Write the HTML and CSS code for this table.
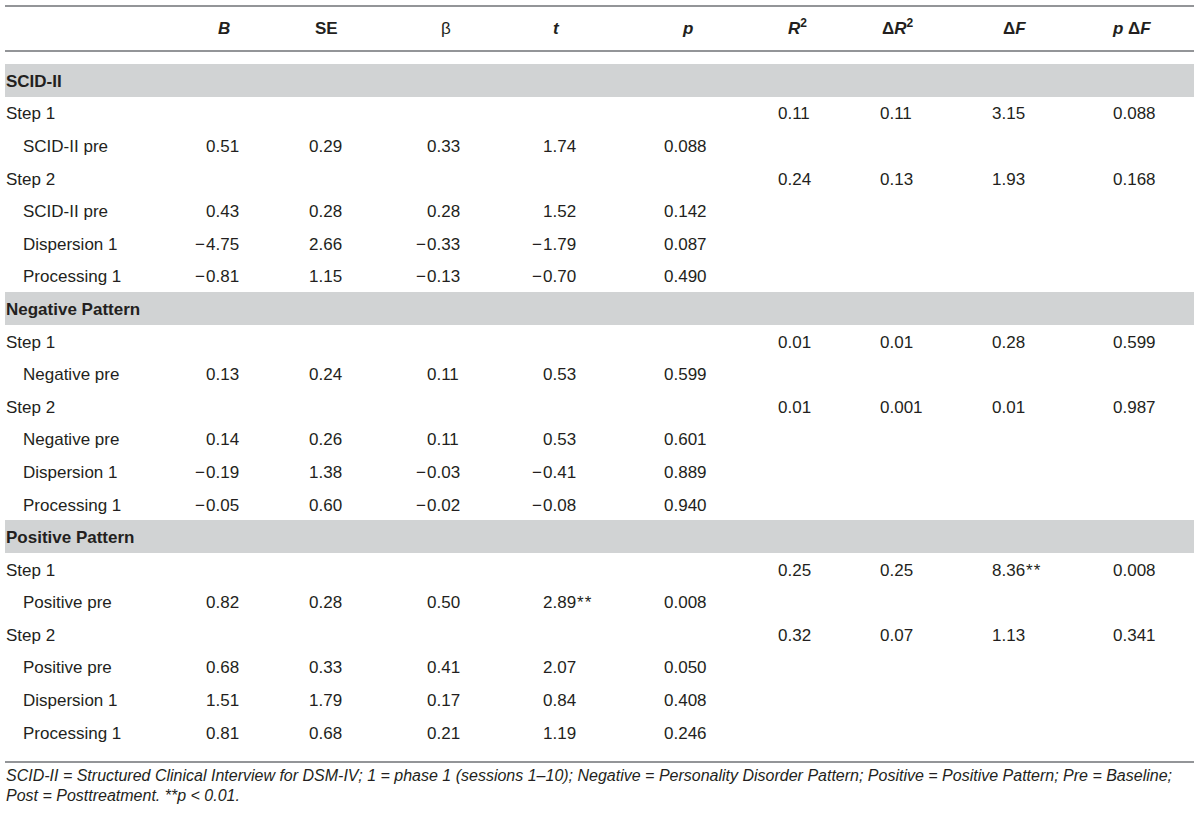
FILE: index.html
```html
<!DOCTYPE html>
<html><head>
<title>Hierarchical regression</title>
<link rel="stylesheet" href="styles.css">
<meta http-equiv="content-type" content="text/html; charset=UTF-8">
</head>
<body>
<div class="sheet">

<table class="reg">
<colgroup>
  <col class="c-label"><col class="c-b"><col class="c-se"><col class="c-beta"><col class="c-t">
  <col class="c-p"><col class="c-r2"><col class="c-dr2"><col class="c-df"><col class="c-pdf">
</colgroup>
<thead><tr>
  <th></th>
  <th><i>B</i></th>
  <th>SE</th>
  <th class="plain">&beta;</th>
  <th><i>t</i></th>
  <th><i>p</i></th>
  <th><i>R</i><sup>2</sup></th>
  <th>&Delta;<i>R</i><sup>2</sup></th>
  <th>&Delta;<i>F</i></th>
  <th><i>p</i> &Delta;<i>F</i></th>
</tr></thead>
<tbody>
<tr class="gap"><td colspan="10"></td></tr>

<tr class="band"><td colspan="10">SCID-II</td></tr>
<tr><td class="lbl">Step 1</td><td></td><td></td><td></td><td></td><td></td><td>0.11</td><td>0.11</td><td>3.15</td><td>0.088</td></tr>
<tr><td class="lbl sub">SCID-II pre</td><td>0.51</td><td>0.29</td><td>0.33</td><td>1.74</td><td>0.088</td><td></td><td></td><td></td><td></td></tr>
<tr><td class="lbl">Step 2</td><td></td><td></td><td></td><td></td><td></td><td>0.24</td><td>0.13</td><td>1.93</td><td>0.168</td></tr>
<tr><td class="lbl sub">SCID-II pre</td><td>0.43</td><td>0.28</td><td>0.28</td><td>1.52</td><td>0.142</td><td></td><td></td><td></td><td></td></tr>
<tr><td class="lbl sub">Dispersion 1</td><td><span class="neg">&minus;</span>4.75</td><td>2.66</td><td><span class="neg">&minus;</span>0.33</td><td><span class="neg">&minus;</span>1.79</td><td>0.087</td><td></td><td></td><td></td><td></td></tr>
<tr><td class="lbl sub">Processing 1</td><td><span class="neg">&minus;</span>0.81</td><td>1.15</td><td><span class="neg">&minus;</span>0.13</td><td><span class="neg">&minus;</span>0.70</td><td>0.490</td><td></td><td></td><td></td><td></td></tr>

<tr class="band"><td colspan="10">Negative Pattern</td></tr>
<tr><td class="lbl">Step 1</td><td></td><td></td><td></td><td></td><td></td><td>0.01</td><td>0.01</td><td>0.28</td><td>0.599</td></tr>
<tr><td class="lbl sub">Negative pre</td><td>0.13</td><td>0.24</td><td>0.11</td><td>0.53</td><td>0.599</td><td></td><td></td><td></td><td></td></tr>
<tr><td class="lbl">Step 2</td><td></td><td></td><td></td><td></td><td></td><td>0.01</td><td>0.001</td><td>0.01</td><td>0.987</td></tr>
<tr><td class="lbl sub">Negative pre</td><td>0.14</td><td>0.26</td><td>0.11</td><td>0.53</td><td>0.601</td><td></td><td></td><td></td><td></td></tr>
<tr><td class="lbl sub">Dispersion 1</td><td><span class="neg">&minus;</span>0.19</td><td>1.38</td><td><span class="neg">&minus;</span>0.03</td><td><span class="neg">&minus;</span>0.41</td><td>0.889</td><td></td><td></td><td></td><td></td></tr>
<tr><td class="lbl sub">Processing 1</td><td><span class="neg">&minus;</span>0.05</td><td>0.60</td><td><span class="neg">&minus;</span>0.02</td><td><span class="neg">&minus;</span>0.08</td><td>0.940</td><td></td><td></td><td></td><td></td></tr>

<tr class="band"><td colspan="10">Positive Pattern</td></tr>
<tr><td class="lbl">Step 1</td><td></td><td></td><td></td><td></td><td></td><td>0.25</td><td>0.25</td><td>8.36<span class="sig">**</span></td><td>0.008</td></tr>
<tr><td class="lbl sub">Positive pre</td><td>0.82</td><td>0.28</td><td>0.50</td><td>2.89<span class="sig">**</span></td><td>0.008</td><td></td><td></td><td></td><td></td></tr>
<tr><td class="lbl">Step 2</td><td></td><td></td><td></td><td></td><td></td><td>0.32</td><td>0.07</td><td>1.13</td><td>0.341</td></tr>
<tr><td class="lbl sub">Positive pre</td><td>0.68</td><td>0.33</td><td>0.41</td><td>2.07</td><td>0.050</td><td></td><td></td><td></td><td></td></tr>
<tr><td class="lbl sub">Dispersion 1</td><td>1.51</td><td>1.79</td><td>0.17</td><td>0.84</td><td>0.408</td><td></td><td></td><td></td><td></td></tr>
<tr><td class="lbl sub">Processing 1</td><td>0.81</td><td>0.68</td><td>0.21</td><td>1.19</td><td>0.246</td><td></td><td></td><td></td><td></td></tr>

<tr class="gap last"><td colspan="10"></td></tr>
</tbody>
</table>

<p class="note">SCID-II = Structured Clinical Interview for DSM-IV; 1 = phase 1 (sessions 1&ndash;10); Negative = Personality Disorder Pattern; Positive = Positive Pattern; Pre = Baseline; Post = Posttreatment. **p &lt; 0.01.</p>

</div>
</body></html>
```

FILE: styles.css
```css
body {
  margin: 0;
  background: #fff;
  color: #231f20;
  font-family: "Liberation Sans", Arial, sans-serif;
}

.sheet { padding: 5px 0 0 5px; width: 1188px; }

.reg {
  width: 1188px;
  table-layout: fixed;
  border-collapse: collapse;
  font-size: 17px;
}

.c-label { width: 201px; }
.c-b    { width: 103px; }
.c-se   { width: 118px; }
.c-beta { width: 116px; }
.c-t    { width: 121px; }
.c-p    { width: 114px; }
.c-r2   { width: 102px; }
.c-dr2  { width: 112px; }
.c-df   { width: 121px; }
.c-pdf  { width: 81px; }

.reg th {
  height: 42px;
  padding: 1px 0 0;
  text-align: left;
  vertical-align: middle;
  font-weight: bold;
  border-top: 2px solid #939598;
  border-bottom: 2px solid #939598;
}
.reg th.plain { font-weight: normal; }
.reg th sup { font-size: 12px; font-style: normal; line-height: 0; }

/* header offsets over each column of figures */
.reg th:nth-child(2)  { padding-left: 12px; }
.reg th:nth-child(3)  { padding-left: 6px; }
.reg th:nth-child(4)  { padding-left: 14px; }
.reg th:nth-child(5)  { padding-left: 10px; }
.reg th:nth-child(6)  { padding-left: 19px; }
.reg th:nth-child(7)  { padding-left: 10px; }
.reg th:nth-child(8)  { padding-left: 2px; }
.reg th:nth-child(9)  { padding-left: 11px; }
.reg th:nth-child(10) { padding-left: 0; }

.reg td {
  height: 32.6px;
  padding: 0;
  text-align: left;
  vertical-align: middle;
  white-space: nowrap;
}
.reg tbody tr:not(.gap) td { padding-top: 3px; box-sizing: border-box; }

.reg tr.gap td { height: 12px; }
.reg tr.last td { height: 13px; border-bottom: 2px solid #939598; }

.reg tr.band td {
  background: #d1d3d4;
  font-weight: bold;
  padding-left: 1px;
  height: 32.6px;
}

.lbl { padding-left: 1px !important; }
.sub { padding-left: 18px !important; }

.neg { display: inline-block; width: 11px; margin-left: -11px; }
.sig { letter-spacing: 1px; margin-left: 1px; }

.note {
  margin: 3px 0 0 1px;
  font-size: 16px;
  line-height: 20px;
  font-style: italic;
}
```
